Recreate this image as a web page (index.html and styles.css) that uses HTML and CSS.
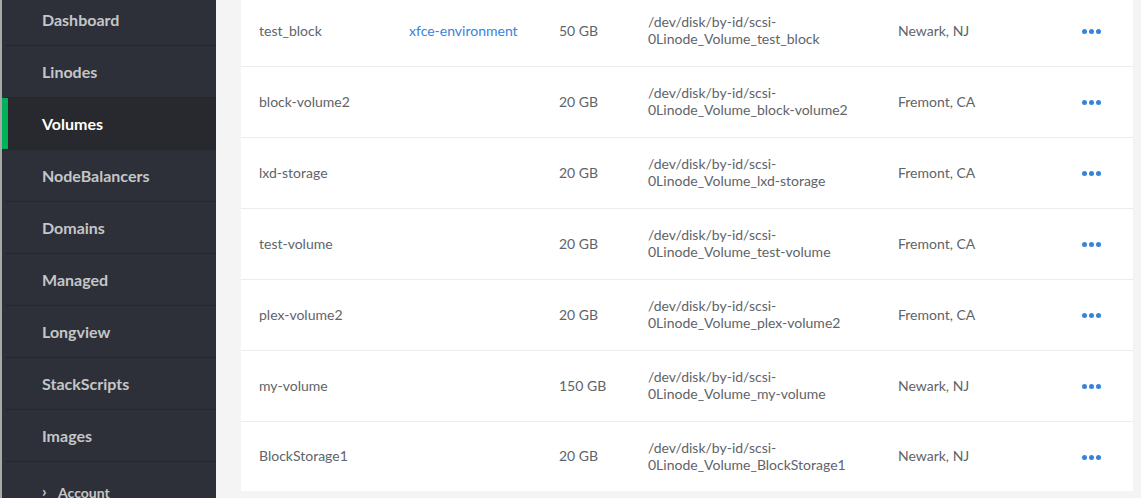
FILE: index.html
```html
<!DOCTYPE html>
<html>
<head>
<meta charset="utf-8">
<link rel="stylesheet" href="styles.css">
</head>
<body>
<div class="app">
  <div class="edge"></div>
  <nav class="sidebar">
    <div class="nav-list">
      <div class="nav-item">Dashboard</div>
      <div class="nav-item">Linodes</div>
      <div class="nav-item active">Volumes</div>
      <div class="nav-item">NodeBalancers</div>
      <div class="nav-item">Domains</div>
      <div class="nav-item">Managed</div>
      <div class="nav-item">Longview</div>
      <div class="nav-item">StackScripts</div>
      <div class="nav-item">Images</div>
      <div class="nav-item sub"><span class="chev">&#8250;</span>Account</div>
    </div>
  </nav>
  <main class="main">
    <div class="card">
      <div class="row">
        <div class="cell">test_block</div>
        <div class="cell"><a class="link">xfce-environment</a></div>
        <div class="cell">50 GB</div>
        <div class="cell">/dev/disk/by-id/scsi-<br>0Linode_Volume_test_block</div>
        <div class="cell">Newark, NJ</div>
        <div class="cell"><span class="dots"><i></i><i></i><i></i></span></div>
      </div>
      <div class="row">
        <div class="cell">block-volume2</div>
        <div class="cell"></div>
        <div class="cell">20 GB</div>
        <div class="cell">/dev/disk/by-id/scsi-<br>0Linode_Volume_block-volume2</div>
        <div class="cell">Fremont, CA</div>
        <div class="cell"><span class="dots"><i></i><i></i><i></i></span></div>
      </div>
      <div class="row">
        <div class="cell">lxd-storage</div>
        <div class="cell"></div>
        <div class="cell">20 GB</div>
        <div class="cell">/dev/disk/by-id/scsi-<br>0Linode_Volume_lxd-storage</div>
        <div class="cell">Fremont, CA</div>
        <div class="cell"><span class="dots"><i></i><i></i><i></i></span></div>
      </div>
      <div class="row">
        <div class="cell">test-volume</div>
        <div class="cell"></div>
        <div class="cell">20 GB</div>
        <div class="cell">/dev/disk/by-id/scsi-<br>0Linode_Volume_test-volume</div>
        <div class="cell">Fremont, CA</div>
        <div class="cell"><span class="dots"><i></i><i></i><i></i></span></div>
      </div>
      <div class="row">
        <div class="cell">plex-volume2</div>
        <div class="cell"></div>
        <div class="cell">20 GB</div>
        <div class="cell">/dev/disk/by-id/scsi-<br>0Linode_Volume_plex-volume2</div>
        <div class="cell">Fremont, CA</div>
        <div class="cell"><span class="dots"><i></i><i></i><i></i></span></div>
      </div>
      <div class="row">
        <div class="cell">my-volume</div>
        <div class="cell"></div>
        <div class="cell">150 GB</div>
        <div class="cell">/dev/disk/by-id/scsi-<br>0Linode_Volume_my-volume</div>
        <div class="cell">Newark, NJ</div>
        <div class="cell"><span class="dots"><i></i><i></i><i></i></span></div>
      </div>
      <div class="row last">
        <div class="cell">BlockStorage1</div>
        <div class="cell"></div>
        <div class="cell">20 GB</div>
        <div class="cell">/dev/disk/by-id/scsi-<br>0Linode_Volume_BlockStorage1</div>
        <div class="cell">Newark, NJ</div>
        <div class="cell"><span class="dots"><i></i><i></i><i></i></span></div>
      </div>
    </div>
  </main>
</div>
</body>
</html>
```
FILE: styles.css
```css
html, body {
  margin: 0;
  padding: 0;
  height: 100%;
  overflow: hidden;
  font-family: Lato, "Open Sans", sans-serif;
}
.app {
  display: flex;
  height: 498px;
  background: #f4f4f4;
}
.edge {
  width: 2px;
  flex: none;
  background: #a9a9a9;
}
.sidebar {
  width: 214px;
  flex: none;
  background: #2d3039;
  overflow: hidden;
}
.nav-list {
  margin-top: -6px;
  padding-left: 3px;
}
.nav-item {
  height: 51px;
  border-bottom: 1px solid #25272d;
  display: flex;
  align-items: center;
  padding-left: 37px;
  font-size: 16px;
  font-weight: bold;
  color: #c5c6c8;
}
.nav-item.active {
  background: #27292e;
  color: #ffffff;
  margin-left: -3px;
  padding-left: 40px;
  box-shadow: inset 6px 0 0 #00b159;
}
.nav-item.sub {
  font-size: 14px;
  align-items: flex-start;
  padding-top: 22px;
  height: 29px;
}
.chev {
  display: inline-block;
  width: 16px;
  font-size: 16px;
  line-height: 14px;
}
.main {
  flex: 1;
  padding: 0 8px 0 25px;
  overflow: hidden;
}
.card {
  margin-top: -4px;
  background: #ffffff;
  width: 892px;
}
.row {
  display: grid;
  grid-template-columns: 150px 150px 89px 250px 184px 1fr;
  align-items: center;
  height: 68px;
  padding: 0 0 2px 18px;
  border-bottom: 1px solid #ececec;
  font-size: 14px;
  line-height: 17px;
  color: #606469;
}
.row.last {
  height: 67px;
  border-bottom: none;
}
.cell {
  white-space: nowrap;
}
.link {
  color: #3683dc;
  text-decoration: none;
}
.dots {
  display: inline-flex;
  gap: 2px;
  vertical-align: middle;
}
.dots i {
  display: block;
  width: 5px;
  height: 5px;
  border-radius: 50%;
  background: #3683dc;
}
```
